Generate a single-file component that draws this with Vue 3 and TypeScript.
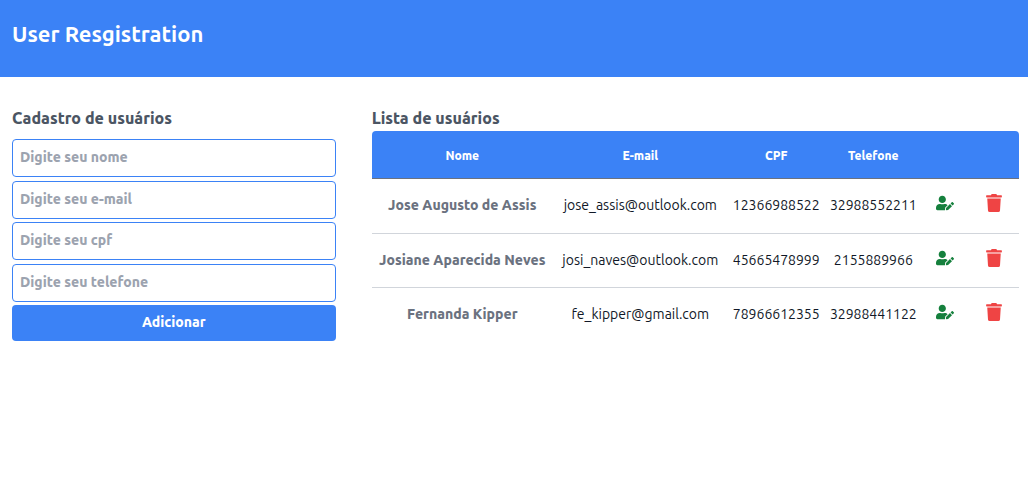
<script setup lang="ts">
import { reactive, ref } from 'vue'

interface User {
  name: string
  email: string
  cpf: string
  phone: string
}

const fields: { key: keyof User; type: string; placeholder: string }[] = [
  { key: 'name', type: 'text', placeholder: 'Digite seu nome' },
  { key: 'email', type: 'email', placeholder: 'Digite seu e-mail' },
  { key: 'cpf', type: 'text', placeholder: 'Digite seu cpf' },
  { key: 'phone', type: 'tel', placeholder: 'Digite seu telefone' },
]

const form = reactive<User>({ name: '', email: '', cpf: '', phone: '' })

const users = ref<User[]>([
  { name: 'Jose Augusto de Assis', email: 'jose_assis@outlook.com', cpf: '12366988522', phone: '32988552211' },
  { name: 'Josiane Aparecida Neves', email: 'josi_naves@outlook.com', cpf: '45665478999', phone: '2155889966' },
  { name: 'Fernanda Kipper', email: 'fe_kipper@gmail.com', cpf: '78966612355', phone: '32988441122' },
])

function addUser() {
  if (!form.name) return
  users.value.push({ ...form })
  Object.assign(form, { name: '', email: '', cpf: '', phone: '' })
}

function editUser(index: number) {
  Object.assign(form, users.value[index])
}

function removeUser(index: number) {
  users.value.splice(index, 1)
}
</script>

<template>
  <div class="page">
    <header class="topbar">
      <h1>User Resgistration</h1>
    </header>
    <main class="content">
      <section>
        <h2>Cadastro de usuários</h2>
        <form class="form" @submit.prevent="addUser">
          <input
            v-for="field in fields"
            :key="field.key"
            v-model="form[field.key]"
            :type="field.type"
            :placeholder="field.placeholder"
            :aria-label="field.placeholder"
          />
          <button type="submit" class="submit">Adicionar</button>
        </form>
      </section>
      <section>
        <h2>Lista de usuários</h2>
        <table>
          <colgroup>
            <col class="col-name" />
            <col class="col-email" />
            <col class="col-number" />
            <col class="col-number" />
            <col class="col-action" />
            <col class="col-action" />
          </colgroup>
          <thead>
            <tr>
              <th scope="col">Nome</th>
              <th scope="col">E-mail</th>
              <th scope="col">CPF</th>
              <th scope="col">Telefone</th>
              <th></th>
              <th></th>
            </tr>
          </thead>
          <tbody>
            <tr v-for="(user, index) in users" :key="user.cpf">
              <th scope="row">{{ user.name }}</th>
              <td>{{ user.email }}</td>
              <td>{{ user.cpf }}</td>
              <td>{{ user.phone }}</td>
              <td>
                <button type="button" class="icon edit" aria-label="Editar" @click="editUser(index)">
                  <svg viewBox="0 0 640 512" width="18" height="18" aria-hidden="true">
                    <path d="M224 256c70.7 0 128-57.3 128-128S294.700 0 224 0 96 57.300 96 128s57.300 128 128 128zm89.600 32h-16.700c-22.200 10.200-46.900 16-72.900 16s-50.600-5.800-72.900-16h-16.700C60.200 288 0 348.200 0 422.400V464c0 26.500 21.500 48 48 48h274.900c-2.400-6.800-3.400-14-2.600-21.300l6.800-60.900 1.200-11.100 7.900-7.900 77.300-77.300c-24.500-27.700-60-45.500-99.900-45.500zm45.300 145.300l-6.800 61c-1.100 10.200 7.500 18.800 17.600 17.600l60.900-6.800 137.900-137.900-71.700-71.700-137.900 137.800zM633 268.900L595.100 231c-9.300-9.300-24.500-9.300-33.800 0l-37.800 37.800-4.100 4.100 71.800 71.700 41.800-41.800c9.300-9.400 9.300-24.500 0-33.900z" />
                  </svg>
                </button>
              </td>
              <td>
                <button type="button" class="icon remove" aria-label="Excluir" @click="removeUser(index)">
                  <svg viewBox="0 0 448 512" width="18" height="18" aria-hidden="true">
                    <path d="M432 32H312l-9.400-18.700A24 24 0 0 0 281.100 0H166.800a23.720 23.720 0 0 0-21.400 13.300L136 32H16A16 16 0 0 0 0 48v32a16 16 0 0 0 16 16h416a16 16 0 0 0 16-16V48a16 16 0 0 0-16-16zM53.200 467a48 48 0 0 0 47.900 45h245.800a48 48 0 0 0 47.900-45L416 128H32z" />
                  </svg>
                </button>
              </td>
            </tr>
          </tbody>
        </table>
      </section>
    </main>
  </div>
</template>

<style>
body {
  margin: 0;
  background: #ffffff;
}
</style>

<style scoped>
.page {
  font-family: Ubuntu, 'Noto Sans', sans-serif;
  color: #111827;
}

.page * {
  box-sizing: border-box;
}

.topbar {
  padding: 20px 12px 29px;
  background: #3b82f6;
}

h1 {
  margin: 0;
  font-size: 22px;
  font-weight: 700;
  line-height: 28px;
  color: #ffffff;
}

.content {
  display: grid;
  grid-template-columns: 1fr 2fr;
  align-items: start;
  gap: 36px;
  padding: 29px 9px 29px 12px;
}

h2 {
  margin: 0;
  font-size: 16px;
  font-weight: 800;
  line-height: 25px;
  color: #4b5563;
}

.form {
  display: flex;
  flex-direction: column;
  justify-content: space-between;
  min-height: 210px;
  padding-top: 8px;
}

.form input {
  width: 100%;
  height: 38px;
  padding: 0 7px 2px;
  border: 1px solid #3b82f6;
  border-radius: 4px;
  background: #ffffff;
  font: 800 14px Ubuntu, 'Noto Sans', sans-serif;
  color: #4b5563;
}

.form input::placeholder {
  color: #9ca3af;
  opacity: 1;
}

.submit {
  height: 36px;
  padding: 0 0 2px;
  border: 0;
  border-radius: 4px;
  background: #3b82f6;
  font: 800 14px Ubuntu, 'Noto Sans', sans-serif;
  color: #ffffff;
  cursor: pointer;
}

table {
  width: 100%;
  table-layout: fixed;
  border-collapse: separate;
  border-spacing: 0;
  font-size: 14px;
  line-height: 20px;
  text-align: center;
}

.col-name {
  width: 28%;
}

.col-email {
  width: 27%;
}

.col-number {
  width: 15%;
}

th,
td {
  padding: 0;
  white-space: nowrap;
}

th {
  font-weight: 800;
}

thead th {
  height: 48px;
  padding-top: 2px;
  border-bottom: 1px solid #6b7280;
  background: #3b82f6;
  font-size: 12px;
  color: #ffffff;
}

thead th:first-child {
  border-top-left-radius: 4px;
}

thead th:last-child {
  border-top-right-radius: 4px;
}

tbody th,
tbody td {
  height: 54px;
  padding-bottom: 2px;
}

tbody tr:first-child > * {
  height: 55px;
}

tbody tr:not(:last-child) > * {
  border-bottom: 1px solid #d1d5db;
}

tbody th {
  color: #6b7280;
}

.icon {
  display: block;
  margin: 0 auto;
  padding: 0 2px 4px 0;
  border: 0;
  background: none;
  cursor: pointer;
}

.icon svg {
  display: block;
  fill: currentColor;
}

.edit {
  color: #15803d;
}

.remove {
  color: #ef4444;
}
</style>
